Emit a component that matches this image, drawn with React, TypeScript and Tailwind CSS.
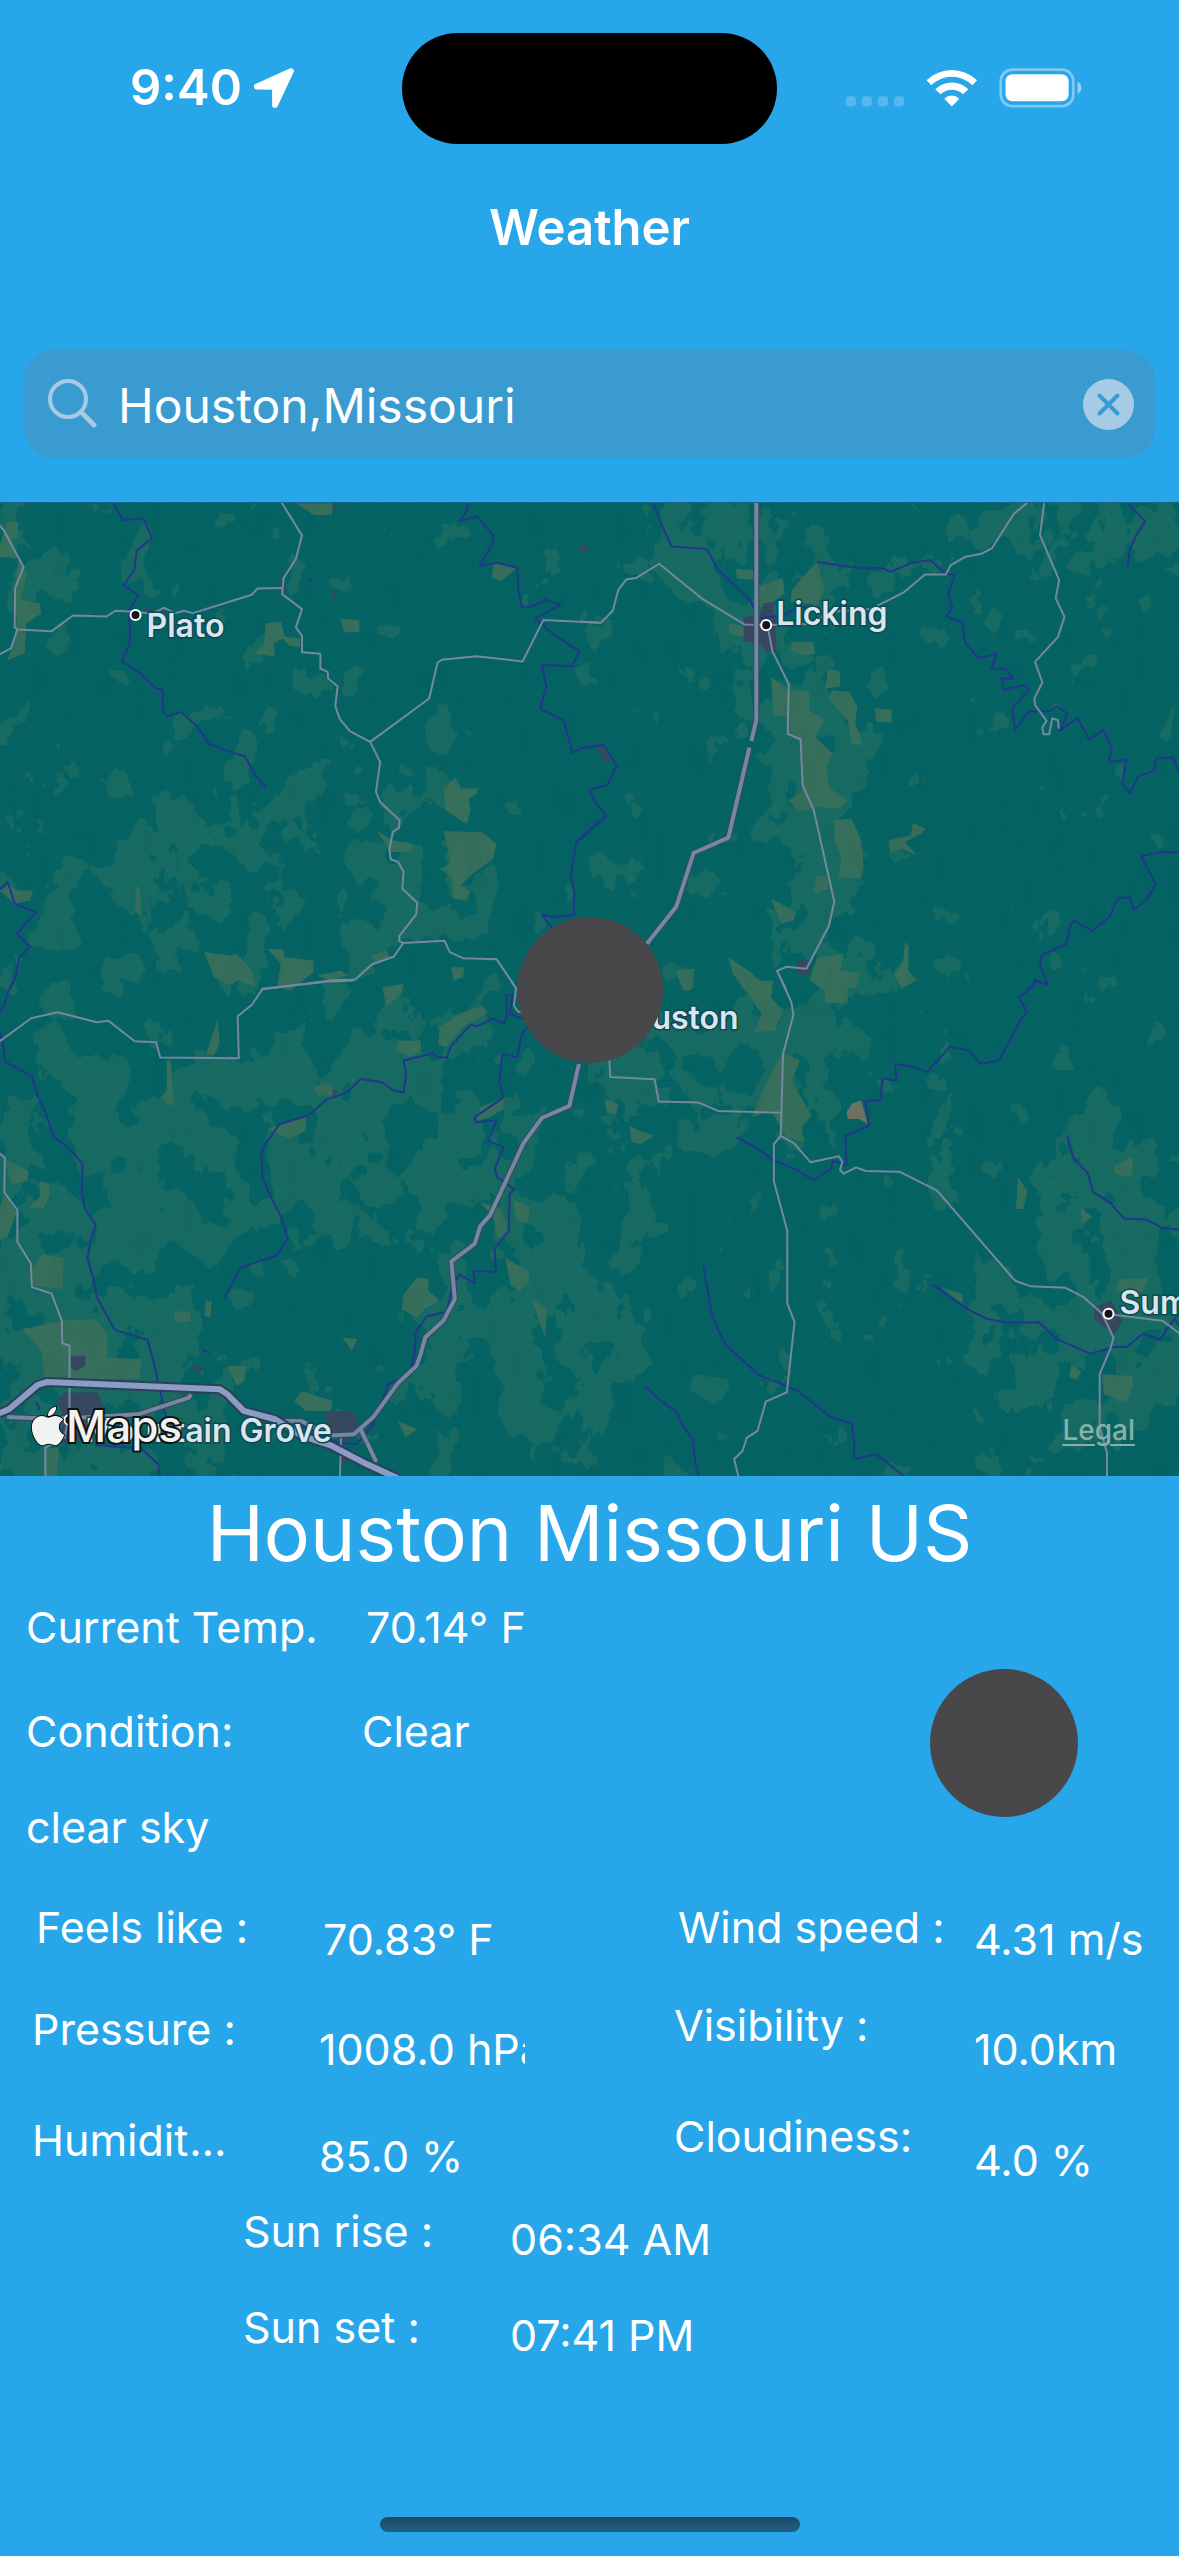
import React, { useState } from "react";
import { FaApple } from "react-icons/fa";

type Tile = {
  transform: string;
  rivers: string[];
  roads: string[];
  highways: string[];
  freeways: string[];
  farmland: string[];
  towns: string[];
};

const northWest: Tile = {
  transform: "translate(0 -13) scale(0.38265 0.33333)",
  rivers: [
    "298,38 322,91 376,85 398,143 359,181 352,240 324,287 363,315 338,362 341,410 340,462 319,512 369,550 408,594 426,597 427,662 438,678 474,665 516,708 546,760 592,781 641,798 669,857 698,894",
    "1224,38 1222,60 1202,92 1247,80 1290,137 1288,160 1254,226 1300,218 1352,234 1355,300 1364,350 1388,350 1427,329 1465,344 1399,385 1442,428 1514,483 1495,528 1416,524 1428,590 1411,656 1473,690 1485,740 1496,788 1520,773 1568,766",
    "1568,990 1506,1056 1492,1155 1501,1210 1500,1273 1445,1280 1416,1272 1445,1315",
    "0,1198 22,1175 40,1240 95,1266 46,1330 80,1369 52,1402 43,1455 25,1500",
    "804,265 812,268 814,275",
  ],
  roads: [
    "0,105 12,122 63,231 41,295 40,412 47,418 137,423 192,376 280,379 303,362 340,364 400,370 429,353 459,369 482,362 505,369 659,314 674,295 740,294",
    "47,418 30,475 0,493",
    "737,38 790,136 774,207 742,264 738,312 790,357 774,412 790,437 790,486 838,491 838,535 857,545 858,565 883,588 877,648 889,687 915,723 968,755 994,815 983,905 994,935 1045,990 1043,1012 1027,1025 1018,1078 1022,1107 1041,1115 1055,1143 1052,1195 1091,1237 1088,1272 1044,1337 1044,1352 1054,1358 1162,1351 1176,1385 1210,1403 1298,1406 1353,1500",
    "1054,1358 1030,1398 972,1422 929,1467 870,1469 683,1497",
    "968,755 1122,625 1144,517 1155,509 1246,498 1366,514 1420,390 1568,398",
  ],
  highways: [],
  freeways: [],
  farmland: [
    "0,170 20,95 48,95 48,140 30,150 52,205 0,200",
    "50,205 72,250 55,330 105,340 110,370 70,400 66,490 20,510 35,470 45,400 40,300",
    "775,40 870,40 868,75 820,75",
    "695,400 735,395 745,440 785,445 785,472 755,465 740,445 715,460 720,500 665,490 690,465",
    "890,385 940,390 940,425 900,427",
    "1160,895 1190,862 1205,895 1250,895 1245,910 1225,925 1230,960 1220,1000 1205,990 1165,960",
    "1160,1023 1260,1025 1297,1060 1290,1105 1230,1155 1205,1185 1230,1205 1220,1230 1185,1225 1180,1160 1150,1135 1178,1120",
    "985,1020 1025,1050 1080,1060 1075,1085 1020,1085",
    "535,1385 600,1395 620,1390 660,1440 670,1490 625,1470 600,1485 560,1460",
    "700,1375 740,1378 745,1400 820,1410 820,1445 760,1500 725,1485 735,1420",
    "1290,218 1350,235 1310,272 1285,262",
    "355,1180 368,1200 370,1275 355,1265",
    "0,1200 25,1185 50,1200 88,1200 80,1230 40,1240",
    "970,1395 1010,1380 1020,1400 980,1420",
    "1180,1430 1215,1430 1210,1460 1185,1470",
    "830,1455 890,1440 910,1455 860,1470",
  ],
  towns: [
    "730,270 742,270 748,315 736,310",
    "870,300 883,318 870,332",
    "380,355 398,355 396,368 378,368",
    "870,40 882,48 872,70",
  ],
};

const northEast: Tile = {
  transform: "translate(580 -13) scale(0.38202 0.33333)",
  rivers: [
    "0,773 63,764 96,827 72,884 25,897 36,930 69,976 0,1048",
    "191,38 215,108 239,169 332,177 361,240 408,289 445,330 458,360",
    "470,385 530,375 575,350 627,355",
    "619,216 740,235 790,234 812,245 866,219 917,210 955,252 980,254 963,312 974,354 958,379 1000,398 1007,459 1043,504 1091,490 1075,535 1115,537 1133,566 1102,564 1107,598 1163,585 1173,598 1131,655 1138,718 1174,663 1229,662 1247,648 1275,670 1254,722 1301,683 1331,748 1368,719 1391,776 1382,815 1429,808 1418,878 1438,910 1459,859 1501,841 1507,804 1551,802 1568,850",
    "1432,38 1478,94 1453,138 1437,180 1432,228",
    "1568,1087 1524,1084 1467,1097 1506,1183 1480,1230 1448,1258 1437,1220 1405,1224 1385,1279 1340,1321 1293,1291 1283,1300 1272,1360 1207,1394 1203,1424 1223,1482 1188,1467 1185,1485 1170,1500",
  ],
  roads: [
    "0,395 55,398 86,361 100,300 121,268 146,264 207,221 317,324 430,403 490,405 600,402 660,365 760,357 848,306 902,253 957,253 969,226 1006,201 1050,191 1078,174 1134,72 1170,38",
    "490,405 503,483 546,582 543,731 577,747 582,885 611,958 665,1234 651,1306 592,1435 540,1429 515,1441 540,1500",
    "1214,38 1203,135 1253,270 1244,325 1267,380 1250,440 1190,515 1209,577 1188,625 1190,644 1220,692 1209,712 1212,732 1227,732 1235,684 1250,690 1252,715",
  ],
  highways: [
    "461,38 461,690 448,752",
    "443,772 388,1042 297,1088 252,1248 175,1360",
  ],
  freeways: [],
  farmland: [
    "408,237 455,240 455,270 410,265",
    "460,290 530,265 535,310 490,350 460,350",
    "555,300 590,250 620,215 640,300 620,345 550,335",
    "390,400 430,410 428,440 390,430",
    "555,455 610,455 615,490 580,497 550,480",
    "500,560 545,600 600,603 600,660 640,690 615,740 660,790 645,830 650,890 700,930 680,955 620,950 570,965 545,930 580,905 580,760 545,735 545,680 505,675",
    "650,535 680,545 680,590 640,595",
    "660,600 705,605 725,650 720,700 740,765 710,760 700,690 650,625",
    "770,652 815,660 815,697 775,695",
    "665,990 710,985 735,1050 742,1130 735,1165 675,1160 685,1110 665,1050",
    "870,998 905,1015 890,1032 850,1055 882,1095 840,1075 812,1088 808,1050 865,1035",
    "500,1225 565,1265 560,1290 525,1300",
    "610,1210 620,1155 645,1160 650,1195",
    "388,1400 440,1440 480,1480 490,1500 430,1500 400,1450",
    "620,1400 690,1390 680,1440 730,1450 725,1490 640,1500 600,1470",
    "850,1355 860,1370 858,1440 880,1470 840,1495 820,1450 845,1410",
    "250,1440 300,1435 290,1500 270,1500",
  ],
  towns: [
    "428,380 470,378 480,340 505,336 508,378 540,390 510,405 515,485 490,487 470,460 428,452",
    "570,1410 605,1410 598,1455 568,1450",
    "40,764 60,768 80,812 62,812",
    "0,166 25,172 18,184 0,182",
  ],
};

const southWest: Tile = {
  transform: "translate(0 477) scale(0.38265 0.33333)",
  rivers: [
    "38,0 22,35 14,72 0,95",
    "0,155 8,180 14,243 85,287 100,347 122,399 141,468 181,502 217,550 215,630 222,681 252,735 239,771 230,834 245,890 254,948 301,1047 386,1077 401,1135 435,1310",
    "250,1392 370,1402 416,1452 419,1485",
    "587,952 630,860 725,824 753,772 735,707 708,648 687,590 684,518 690,497 731,431 807,404 854,357 908,335 943,295 999,305 1027,329 1055,335 1062,283 1055,240 1132,219 1146,231 1168,231 1178,198 1230,133 1248,137 1287,114 1316,129 1324,110 1324,44 1340,44 1332,100 1378,120",
    "1378,140 1363,165 1352,230 1313,220 1305,300 1315,352 1240,410 1244,425 1298,418 1276,480 1315,500 1293,565 1300,590 1344,625 1332,640 1330,750 1293,803 1296,873 1237,870 1242,909 1200,880 1180,930 1168,993 1115,1007 1087,1055 1084,1120 1075,1160",
    "1060,1185 1015,1210 975,1330 935,1389 880,1385 760,1320",
    "95,1265 103,1278 101,1288",
    "530,1108 545,1113 548,1118",
  ],
  roads: [
    "0,183 83,113 152,95 254,125 285,121 353,182 409,185 420,231 625,233 622,107 660,72 687,25 860,3 925,0",
    "1336,0 1349,25 1343,75 1353,92 1365,97",
    "0,517 14,532 13,635 47,688 47,784 82,848 85,919 136,938 163,1020 164,1087 183,1094 183,1300 170,1370 120,1400 120,1485",
    "892,1365 889,1485",
  ],
  highways: [
    "1513,250 1488,376 1416,412 1368,488 1281,703 1255,737 1241,789 1180,842 1189,955 1159,1020 1112,1069 1099,1122 1089,1155 1041,1206 975,1310 925,1360 865,1364 790,1321 740,1320",
    "943,1345 984,1443",
    "20,1308 100,1312 180,1312 280,1306 366,1299 495,1250 500,1240",
  ],
  freeways: [
    "0,1297 25,1285 100,1212 125,1203 575,1225 595,1240 638,1290 720,1315 790,1365 865,1393 960,1450 1040,1492",
  ],
  farmland: [
    "570,115 575,190 560,225 540,220",
    "437,240 448,240 455,375 437,370 420,350 437,330",
    "1040,180 1100,180 1100,215 1070,230 1035,205",
    "1150,140 1200,100 1260,75 1275,95 1210,140 1165,200 1145,190",
    "820,320 850,305 875,325 870,345 830,345",
    "700,445 800,405 800,450 755,475",
    "15,535 75,570 75,600 30,610",
    "0,680 14,640 45,695 20,770 0,778",
    "75,680 105,650 105,600 130,610 130,650 115,685",
    "110,820 168,830 165,925 88,915 85,860",
    "60,1045 165,1020 250,1015 282,1060 280,1130 370,1135 365,1195 120,1195 110,1110",
    "1055,940 1090,890 1120,895 1120,930 1150,960 1110,985 1090,1010 1050,985",
    "1320,830 1380,870 1385,900 1360,930 1335,915",
    "1390,950 1430,985 1425,1070 1405,1010",
    "1255,665 1310,680 1330,760 1300,770 1290,710",
    "1340,655 1385,680 1380,725 1350,720",
    "1255,380 1320,350 1315,385 1280,410 1245,420",
    "895,1070 935,1075 920,1110",
    "455,990 500,995 500,1020 460,1025",
    "540,960 555,960 550,1010 535,1005",
    "595,1155 645,1155 640,1200 620,1215",
    "1000,20 1055,10 1050,40 1010,80",
    "1040,1320 1090,1345 1060,1370",
    "770,1260 790,1230 870,1260 865,1290 800,1290",
    "120,1400 155,1400 150,1485 120,1485",
  ],
  towns: [
    "150,1260 170,1235 255,1235 275,1280 275,1315 220,1345 200,1380 160,1390 165,1300",
    "850,1290 915,1290 935,1310 935,1350 905,1385 860,1350",
    "187,1125 225,1125 223,1155 200,1170 187,1160",
    "505,1150 535,1162 525,1172 505,1168",
    "870,325 886,333 870,348",
    "470,1238 500,1238 485,1252",
    "892,1415 918,1420 905,1450 892,1440",
  ],
};

const southEast: Tile = {
  transform: "translate(580 477) scale(0.38202 0.33333)",
  rivers: [
    "410,470 460,500 507,540 563,566 612,598 657,563 661,540 697,552 694,466 757,434 745,361 785,359 791,294 828,300 824,250 880,261 907,275 967,199 1017,210 1047,250 1096,239 1153,117 1168,93 1148,50 1188,15 1188,0 1223,12",
    "1274,466 1289,530 1328,578 1341,633 1388,668 1422,713 1481,716 1522,741 1568,747",
    "323,857 343,990 358,1040 380,1090 465,1180 570,1230 655,1308 711,1327 718,1395 716,1435 775,1420 847,1485",
    "171,1216 215,1263 253,1294 264,1325 295,1377 302,1448 311,1485",
    "921,910 1016,987 1062,1013 1115,1026 1200,1024 1246,1074 1335,1119 1395,1099 1430,1098 1473,1058 1516,1076 1554,1015 1568,1035",
  ],
  roads: [
    "527,0 553,66 558,103 531,220 525,466 560,488 603,545 677,527 686,543 680,568 690,579 722,560 747,571 835,573 933,629 1138,900 1178,916 1270,921 1318,950 1365,998 1395,1070 1388,1100 1359,1180 1359,1340 1378,1415 1378,1485",
    "525,466 507,490 507,602 542,750 542,968 561,1023 541,1234 486,1262 464,1350 436,1371 425,1410 403,1435 414,1485",
    "77,240 79,289 195,296 206,363 311,366 361,391 525,396",
    "1383,1000 1524,1020 1568,1058",
  ],
  highways: [],
  freeways: [],
  farmland: [
    "415,0 505,0 500,50 530,90 510,150 455,155 475,100",
    "640,0 700,0 700,70 640,65",
    "490,300 530,215 575,240 555,300 575,345 605,405 580,440 585,485 540,470 500,390 450,410 470,350",
    "130,435 155,450 195,465 160,490 135,485",
    "65,355 100,370 95,400 70,395",
    "1145,590 1170,630 1160,685 1140,685",
    "1395,555 1445,530 1445,590 1400,580",
    "1410,895 1485,892 1470,935 1400,930",
    "1365,1180 1445,1185 1445,1215 1430,1265 1370,1240",
    "945,920 1000,940 1000,970",
    "1285,1150 1310,1170 1300,1195 1280,1190",
    "1310,680 1340,710 1310,730",
  ],
  towns: ["1345,980 1390,958 1418,1020 1398,1060 1345,1015"],
};

const tiles: Tile[] = [northWest, northEast, southWest, southEast];

// Centre, radii and weight of each area of open land, in map units.
const openLand: [number, number, number, number, number][] = [
  [60, 690, 110, 200, 0.5],
  [110, 860, 130, 160, 0.6],
  [290, 640, 190, 110, 0.6],
  [120, 380, 110, 110, 0.35],
  [230, 360, 110, 100, 0.4],
  [340, 290, 50, 60, 0.4],
  [420, 350, 70, 90, 0.5],
  [370, 450, 40, 110, 0.45],
  [440, 560, 110, 60, 0.45],
  [490, 740, 80, 120, 0.5],
  [560, 840, 70, 130, 0.65],
  [470, 870, 60, 70, 0.4],
  [720, 50, 80, 70, 0.65],
  [780, 170, 60, 90, 0.6],
  [820, 320, 50, 150, 0.85],
  [820, 520, 50, 80, 0.5],
  [720, 570, 120, 60, 0.6],
  [640, 640, 80, 60, 0.4],
  [900, 50, 60, 50, 0.3],
  [1080, 20, 90, 50, 0.6],
  [1150, 50, 50, 60, 0.5],
  [1110, 720, 80, 120, 0.65],
  [1080, 850, 120, 110, 0.6],
  [960, 690, 50, 40, 0.3],
  [40, 80, 40, 100, 0.35],
  [130, 70, 50, 50, 0.2],
  [275, 150, 40, 40, 0.3],
  [225, 210, 50, 50, 0.2],
  [610, 760, 40, 80, 0.3],
];

const places = [
  { name: "Plato", x: 147, y: 134, dot: [136, 112] },
  { name: "Licking", x: 776, y: 122, dot: [766, 122] },
  { name: "Houston", x: 608, y: 525, dot: null },
  { name: "Mountain Grove", x: 86, y: 938, dot: [70, 916] },
  { name: "Summersville", x: 1119, y: 810, dot: [1108, 810] },
];

function Lines({ points, className }: { points: string[]; className: string }) {
  return (
    <>
      {points.map((p) => (
        <polyline key={p} points={p} fill="none" strokeLinejoin="round" vectorEffect="non-scaling-stroke" className={className} />
      ))}
    </>
  );
}

function RegionMap() {
  return (
    <svg viewBox="0 0 1179 972" preserveAspectRatio="xMidYMid slice" className="block h-full w-full" role="img" aria-label="Map around Houston, Missouri">
      <defs>
        <filter id="cover" filterUnits="userSpaceOnUse" x="0" y="0" width="1179" height="972" colorInterpolationFilters="sRGB">
          <feGaussianBlur in="SourceGraphic" stdDeviation="20" result="density" />
          <feTurbulence type="fractalNoise" baseFrequency="0.026 0.02" numOctaves={4} seed={11} />
          <feColorMatrix values="0 0 0 0 0  0 0 0 0 0  0 0 0 0 0  1 0 0 0 0" result="noise" />
          <feComposite in="density" in2="noise" operator="arithmetic" k1={0} k2={0.42} k3={1} k4={-0.5} />
          <feComponentTransfer result="shape">
            <feFuncA type="linear" slope={60} intercept={-12} />
          </feComponentTransfer>
          <feFlood floodColor="#176b62" />
          <feComposite in2="shape" operator="in" />
        </filter>
        <filter id="relief" filterUnits="userSpaceOnUse" x="0" y="0" width="1179" height="972" colorInterpolationFilters="sRGB">
          <feTurbulence type="fractalNoise" baseFrequency="0.06 0.025" numOctaves={3} seed={4} />
          <feColorMatrix values="0 0 0 0 0  0 0 0 0 0.3  0 0 0 0 0.35  0.9 0 0 0 -0.42" />
        </filter>
      </defs>
      <rect width="1179" height="972" fill="#056363" />
      <g filter="url(#cover)">
        {openLand.map(([cx, cy, rx, ry, weight]) => (
          <ellipse key={`${cx}-${cy}`} cx={cx} cy={cy} rx={rx} ry={ry} fill="#fff" fillOpacity={weight} />
        ))}
      </g>
      {tiles.map((t) => (
        <g key={t.transform} transform={t.transform}>
          {t.farmland.map((p) => (
            <polygon key={p} points={p} fill="#366f5b" />
          ))}
          {t.towns.map((p) => (
            <polygon key={p} points={p} fill="#37475f" />
          ))}
        </g>
      ))}
      <g transform={southEast.transform}>
        <polygon points="697,395 712,368 735,360 742,385 752,430 730,415 700,415" fill="#6e7263" />
      </g>
      <rect width="1179" height="972" filter="url(#relief)" opacity="0.2" />
      {tiles.map((t) => (
        <g key={t.transform} transform={t.transform}>
          <Lines points={t.rivers} className="stroke-[#20388a] stroke-[2px]" />
        </g>
      ))}
      {tiles.map((t) => (
        <g key={t.transform} transform={t.transform}>
          <Lines points={t.roads} className="stroke-[#7687a0] stroke-[2px]" />
          <Lines points={t.highways} className="stroke-[#37475f] stroke-[6px]" />
          <Lines points={t.highways} className="stroke-[#7488a4] stroke-[4px]" />
          <Lines points={t.freeways} className="stroke-[#2b3f58] stroke-[10px]" />
          <Lines points={t.freeways} className="stroke-[#8c9cc4] stroke-[6px]" />
        </g>
      ))}
      {places.map((p) => (
        <g key={p.name}>
          {p.dot && <circle cx={p.dot[0]} cy={p.dot[1]} r="5" fill="#14141a" stroke="#fff" strokeWidth="2" />}
          <text x={p.x} y={p.y} stroke="#0b4a50" strokeWidth="3" paintOrder="stroke" className="fill-[#dbe5ee] font-['Inter',sans-serif] text-[32px] font-semibold">
            {p.name}
          </text>
        </g>
      ))}
    </svg>
  );
}

function StatusBar() {
  return (
    <header className="grid h-[178px] grid-cols-[1fr_375px_1fr] items-start pt-[33px]">
      <div className="flex h-[110px] items-center justify-center gap-3 pl-[22px]">
        <span className="text-[49px] leading-[60px] font-semibold">9:40</span>
        <svg viewBox="402 56 118 118" className="size-10" aria-hidden="true">
          <path d="M511 65 L410 111 L464 112 L464 165Z" fill="#fff" stroke="#fff" strokeWidth="17" strokeLinejoin="round" />
        </svg>
      </div>
      <div className="h-[111px] rounded-full bg-black" />
      <div className="flex h-[110px] items-center justify-end pr-[97px]">
        <svg viewBox="48 54 706 118" className="h-10 w-[236px]" aria-hidden="true">
          <g fill="#55b8ef">
            <rect x="48" y="138" width="30" height="30" rx="10" />
            <rect x="96" y="138" width="30" height="30" rx="10" />
            <rect x="144" y="138" width="30" height="30" rx="10" />
            <rect x="192" y="138" width="30" height="30" rx="10" />
          </g>
          <g fill="#fff">
            <path d="M289 90 A108 108 0 0 1 440 90 L426 105 A87 87 0 0 0 303 105Z" />
            <path d="M315 117 A70 70 0 0 1 414 117 L398 132 A48 48 0 0 0 331 132Z" />
            <path d="M342 145 A32 32 0 0 1 387 145 L364.500 168Z" />
            <rect x="525" y="72" width="189" height="81" rx="21" />
          </g>
          <rect x="511" y="58" width="217" height="109" rx="34" fill="none" stroke="#7dcaf4" strokeWidth="8" />
          <path d="M741 94 A20 20 0 0 1 741 130Z" fill="#93d3f5" />
        </svg>
      </div>
    </header>
  );
}

function SearchField() {
  const [query, setQuery] = useState("Houston,Missouri");
  return (
    <form role="search" className="mx-6 flex h-[108px] items-center gap-5 rounded-[30px] bg-[#3a9bd0] pr-[21px] pl-6" onSubmit={(e) => e.preventDefault()}>
      <svg viewBox="0 0 50 50" className="size-[50px] shrink-0" fill="none" stroke="#a5cbe7" strokeWidth="4" strokeLinecap="round" aria-hidden="true">
        <circle cx="20" cy="20" r="18" />
        <path d="M33 33 L46 46" strokeWidth="5" />
      </svg>
      <label htmlFor="city" className="sr-only">City</label>
      <input id="city" value={query} onChange={(e) => setQuery(e.target.value)} className="min-w-0 flex-1 bg-transparent pt-1 text-[48px] leading-[60px] text-white outline-none" />
      <button type="button" aria-label="Clear search" onClick={() => setQuery("")} className="size-[51px] shrink-0 rounded-full bg-[#a5cbe7]">
        <svg viewBox="0 0 51 51" className="size-full" stroke="#3a9bd0" strokeWidth="4" strokeLinecap="round" aria-hidden="true">
          <path d="M16.500 16.500 L34.500 34.500 M34.500 16.500 L16.500 34.500" />
        </svg>
      </button>
    </form>
  );
}

export default function App() {
  return (
    <div className="flex min-h-screen w-full flex-col bg-[#27a7ea] font-['Inter',sans-serif] text-white">
      <StatusBar />
      <h1 className="pt-5 text-center text-[49px] leading-[60px] font-semibold">Weather</h1>
      <div className="mt-[92px]">
        <SearchField />
      </div>

      <section className="relative mt-11 h-[974px] overflow-hidden border-t border-[#1b6286]">
        <RegionMap />
        <div className="absolute top-1/2 left-1/2 size-[146px] -translate-x-1/2 -translate-y-1/2 rounded-full bg-[#48484a]" />
        <div className="absolute bottom-6 left-[26px] flex items-center text-[#f1f3f3]">
          <FaApple className="size-11 overflow-visible stroke-black stroke-[20px] [paint-order:stroke]" aria-hidden="true" />
          <span className="-ml-1 text-[44px] leading-[52px] font-medium [paint-order:stroke] [-webkit-text-stroke:4px_#111]">Maps</span>
        </div>
        <a href="#legal" className="absolute right-11 bottom-7 text-[28px] leading-[36px] font-medium text-[#86b0a9] underline decoration-2 underline-offset-4">
          Legal
        </a>
      </section>

      <main className="flex-1 text-[43px] leading-[54px] whitespace-nowrap">
        <h2 className="pt-2 text-center text-[77px] leading-[98px]">Houston Missouri US</h2>

        <div className="mt-[18px] flex pr-[101px] pl-[26px]">
          <dl className="grid flex-1 grid-cols-[336px_1fr] gap-y-[50px]">
            <dt>Current Temp.</dt>
            <dd className="pl-1">70.14° F</dd>
            <dt>Condition:</dt>
            <dd>Clear</dd>
            <dt className="col-span-2 -mt-2">clear sky</dt>
          </dl>
          <div className="mt-[69px] size-[148px] rounded-full bg-[#48484a]" />
        </div>

        <dl className="mt-[46px] grid grid-cols-[287px_1fr_300px_181px] grid-rows-[98px_111px_95px] pr-6 pl-8">
          <dt className="pl-1">Feels like :</dt>
          <dd className="pt-3 pl-1">70.83° F</dd>
          <dt className="pl-1">Wind speed :</dt>
          <dd className="pt-3">4.31 m/s</dd>
          <dt className="pt-1">Pressure :</dt>
          <dd className="w-[206px] overflow-hidden pt-6">1008.0 hPa</dd>
          <dt>Visibility :</dt>
          <dd className="pt-6">10.0km</dd>
          <dt className="w-[200px] truncate pt-1">Humidity :</dt>
          <dd className="pt-5">85.0 %</dd>
          <dt>Cloudiness:</dt>
          <dd className="pt-6">4.0 %</dd>
        </dl>

        <dl className="grid grid-cols-[267px_1fr] gap-y-[42px] pl-[243px]">
          <dt>Sun rise :</dt>
          <dd className="-mb-2 pt-2">06:34 AM</dd>
          <dt>Sun set :</dt>
          <dd className="-mb-2 pt-2">07:41 PM</dd>
        </dl>
      </main>

      <div className="mx-auto mb-6 h-[15px] w-[420px] rounded-full bg-linear-to-b from-[#1d4a64] to-[#206085]" />
    </div>
  );
}
